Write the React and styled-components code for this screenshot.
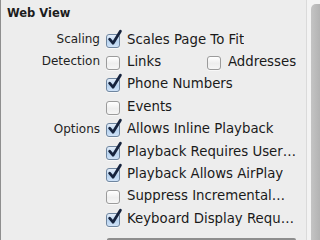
import React from "react";
import styled, { createGlobalStyle } from "styled-components";

const Global = createGlobalStyle`
  html, body { margin: 0; padding: 0; background: #ededed; }
  body { font-family: "DejaVu Sans", "Liberation Sans", sans-serif; }
  #root { width: 320px; height: 240px; overflow: hidden; }
`;

const Frame = styled.div`
  display: flex;
  width: 320px;
  height: 240px;
  overflow: hidden;
`;

const Panel = styled.div`
  width: 305px;
  border-left: 1px solid #8f8f8f;
  background: #ededed;
  display: flex;
  flex-direction: column;
`;

const Heading = styled.div`
  height: 26px;
  line-height: 26px;
  margin-bottom: 2px;
  padding-left: 6px;
  font-size: 11.5px;
  font-weight: bold;
  color: #1c1c1c;
`;

const Grid = styled.div`
  display: grid;
  grid-template-columns: 99px 1fr;
  grid-auto-rows: 22.4px;
  column-gap: 6px;
`;

const Label = styled.div`
  text-align: right;
  font-size: 12px;
  color: #1f1f1f;
  line-height: 22.4px;
`;

const Options = styled.div`
  display: grid;
  grid-template-columns: ${(p) => (p.$split ? "101px 1fr" : "1fr")};
  align-items: center;
  min-width: 0;
`;

const Option = styled.div`
  display: flex;
  align-items: center;
  gap: 7px;
  min-width: 0;
  font-size: 13.3px;
  color: #1a1a1a;
  white-space: nowrap;
`;

const Box = styled.span`
  position: relative;
  flex: none;
  width: 12px;
  height: 12px;
  margin-top: 3px;
  border-radius: 3px;
  border: 1px solid ${(p) => (p.$checked ? "#6f86a0" : "#9b9b9b")};
  background: ${(p) =>
    p.$checked
      ? "linear-gradient(#e4eefa, #b9d4f0 55%, #cfe2f7)"
      : "linear-gradient(#ffffff, #eeeeee 55%, #f6f6f6)"};
  box-shadow: 0 1px 0 rgba(255, 255, 255, 0.6);
`;

const Check = styled.svg`
  position: absolute;
  left: 0px;
  top: -5px;
  width: 15px;
  height: 16px;
  overflow: visible;
`;

const Text = styled.span`
  overflow: hidden;
`;

const Separator = styled.div`
  margin: 3px 10px 0 10px;
  height: 2px;
  background: #d3d3d3;
`;

const Popup = styled.div`
  margin: 5px 10px 0 106px;
  height: 20px;
  border: 1px solid #8e8e8e;
  border-radius: 4px 4px 0 0;
  background: linear-gradient(#d6d6d6, #f4f4f4);
`;

const Track = styled.div`
  flex: none;
  width: 14px;
  border-left: 1px solid #dadada;
  background: #f3f3f3;
  display: flex;
  justify-content: flex-end;
  padding-top: 4px;
  box-sizing: border-box;
`;

const Thumb = styled.div`
  width: 9px;
  height: 260px;
  border-radius: 5px 0 0 0;
  background: linear-gradient(90deg, #c4c4c4, #b3b3b3);
`;

function CheckBox({ checked }) {
  return (
    <Box $checked={checked}>
      {checked && (
        <Check viewBox="0 0 15 16">
          <path
            d="M2.6 9.2 L6 13.2 L13.4 1.2"
            fill="none"
            stroke="#16233d"
            strokeWidth="2.8"
            strokeLinecap="round"
            strokeLinejoin="round"
          />
        </Check>
      )}
    </Box>
  );
}

const rows = [
  { label: "Scaling", items: [{ c: true, t: "Scales Page To Fit" }] },
  {
    label: "Detection",
    items: [
      { c: false, t: "Links" },
      { c: false, t: "Addresses" },
    ],
  },
  { label: "", items: [{ c: true, t: "Phone Numbers" }] },
  { label: "", items: [{ c: false, t: "Events" }] },
  { label: "Options", items: [{ c: true, t: "Allows Inline Playback" }] },
  { label: "", items: [{ c: true, t: "Playback Requires User…" }] },
  { label: "", items: [{ c: true, t: "Playback Allows AirPlay" }] },
  { label: "", items: [{ c: false, t: "Suppress Incremental…" }] },
  { label: "", items: [{ c: true, t: "Keyboard Display Requ…" }] },
];

export default function App() {
  return (
    <>
      <Global />
      <Frame>
        <Panel>
          <Heading>Web View</Heading>
          <Grid>
            {rows.map((r, i) => (
              <React.Fragment key={i}>
                <Label>{r.label}</Label>
                <Options $split={r.items.length > 1}>
                  {r.items.map((it) => (
                    <Option key={it.t}>
                      <CheckBox checked={it.c} />
                      <Text>{it.t}</Text>
                    </Option>
                  ))}
                </Options>
              </React.Fragment>
            ))}
          </Grid>
          <Separator />
          <Popup />
        </Panel>
        <Track>
          <Thumb />
        </Track>
      </Frame>
    </>
  );
}
